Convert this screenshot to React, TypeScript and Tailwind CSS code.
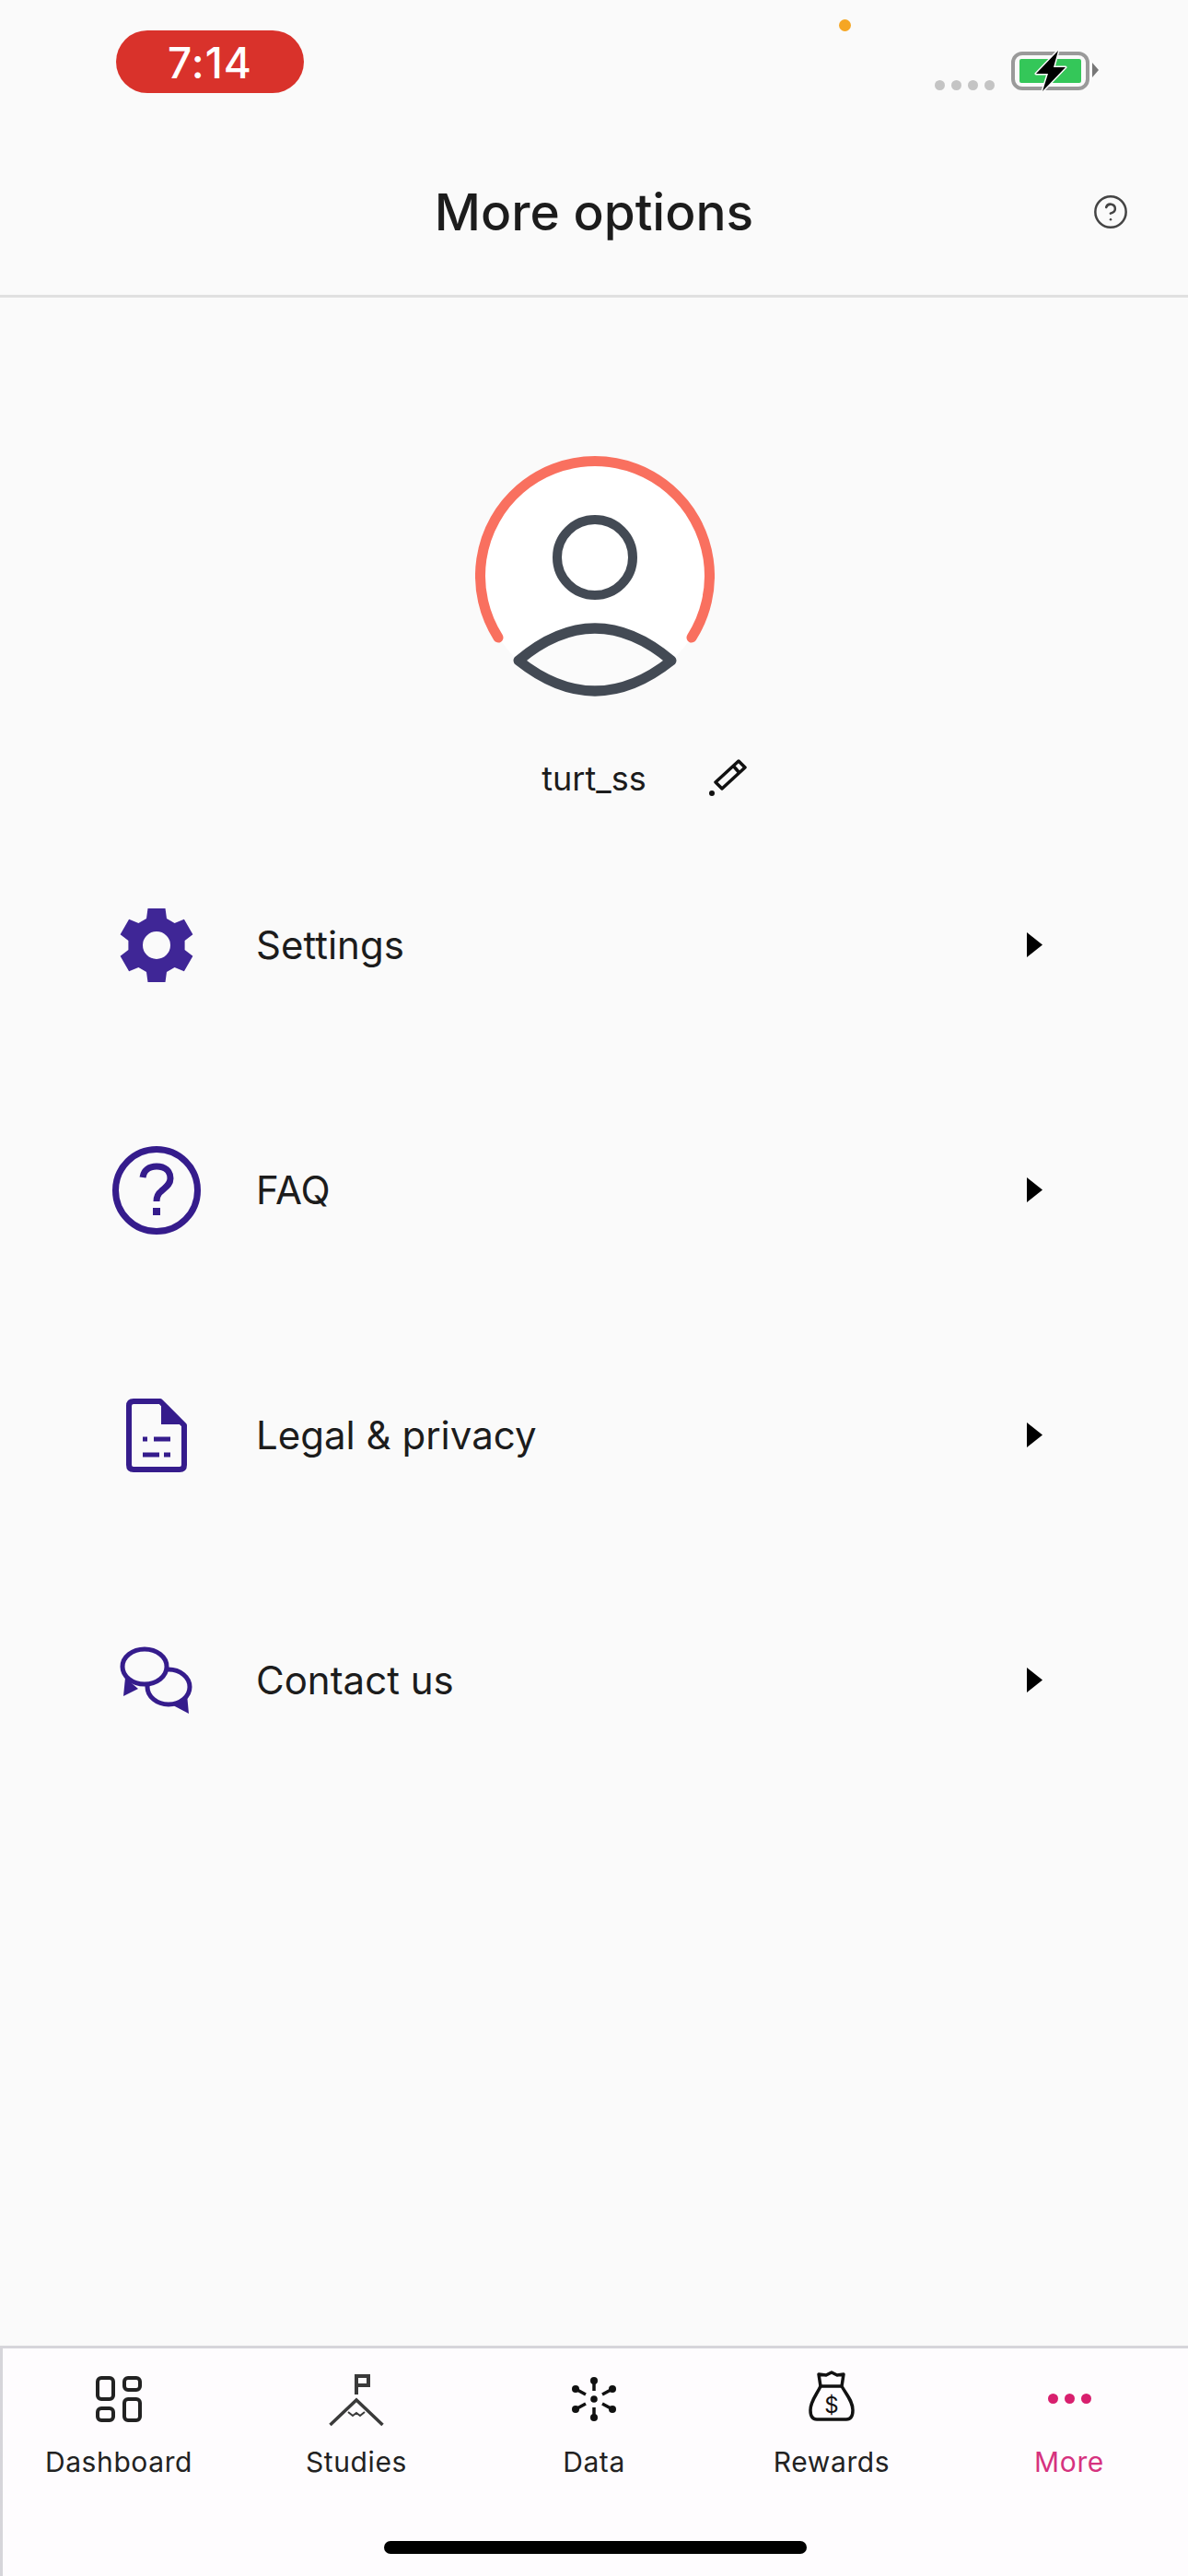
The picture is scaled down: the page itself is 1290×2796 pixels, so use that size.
import React from 'react';
import { CircleHelp } from 'lucide-react';

const PURPLE = '#351c8c';

// six toothed gear, centre 40,40
const gearPath = () => {
  const pts: string[] = [];
  for (let i = 0; i < 6; i++) {
    const a = (i * Math.PI) / 3;
    const at = (r: number, t: number) =>
      `${(40 + r * Math.sin(a) + t * Math.cos(a)).toFixed(1)} ${(40 - r * Math.cos(a) + t * Math.sin(a)).toFixed(1)}`;
    pts.push(at(29, -11), at(40, -9.5), at(40, 9.5), at(29, 11));
  }
  return `M${pts.join(' L')} Z M55 40 A15 15 0 1 0 25 40 A15 15 0 1 0 55 40 Z`;
};

const GearIcon = () => (
  <svg width="80" height="80" viewBox="0 0 80 80">
    <path d={gearPath()} fill="#3f2696" fillRule="evenodd" />
  </svg>
);

const FaqIcon = () => (
  <svg width="96" height="96" viewBox="0 0 96 96" fill="none">
    <circle cx="48" cy="48" r="44.5" stroke={PURPLE} strokeWidth="7" />
    <path
      d="M33 34 C34 26 40 22 48 22 C57 22 63 27 63 35 C63 42 57 45 53 49 C49 52 48 55 48 60"
      stroke={PURPLE}
      strokeWidth="7"
    />
    <rect x="44" y="67" width="8" height="8" fill={PURPLE} />
  </svg>
);

const DocIcon = () => (
  <svg width="66" height="80" viewBox="0 0 66 80" fill="none">
    <path
      d="M8 3 H37 L63 29 V72 Q63 77 58 77 H8 Q3 77 3 72 V8 Q3 3 8 3 Z"
      stroke={PURPLE}
      strokeWidth="6"
      strokeLinejoin="round"
    />
    <path d="M38 4 L63 28 H38 Z" fill={PURPLE} />
    <path d="M18 44 H23 M30 44 H48 M18 61 H36 M41 61 H48" stroke={PURPLE} strokeWidth="5" />
  </svg>
);

const ChatIcon = () => (
  <svg width="80" height="74" viewBox="0 0 80 74" fill="none">
    <path d="M75 73 L73 52 L58 64 Z" fill={PURPLE} />
    <ellipse cx="53" cy="44" rx="23" ry="19" stroke={PURPLE} strokeWidth="5" fill="#fafafa" />
    <path d="M4 54 L6 34 L20 46 Z" fill={PURPLE} />
    <ellipse cx="27" cy="22" rx="24" ry="19" stroke={PURPLE} strokeWidth="5" fill="#fafafa" />
  </svg>
);

const Avatar = () => (
  <svg width="260" height="262" viewBox="0 0 260 262" fill="none" className="ml-[2px]">
    <circle cx="130" cy="130" r="124" fill="#ffffff" />
    <path
      d="M25 197 A124.5 124.5 0 1 1 235 197"
      stroke="#f9705f"
      strokeWidth="11"
      strokeLinecap="round"
    />
    <circle cx="130" cy="110" r="41" stroke="#434a54" strokeWidth="10" />
    <path
      d="M47 222 Q130 152 213 222 Q130 288 47 222 Z"
      stroke="#434a54"
      strokeWidth="11"
      strokeLinejoin="round"
      fill="#fbfbfb"
    />
  </svg>
);

const Pencil = () => (
  <svg width="42" height="42" viewBox="0 0 42 42" fill="none" className="ml-[67px]">
    <path d="M8 25 L33 2 L40 9 L15 32 Z" stroke="#111" strokeWidth="3.5" strokeLinejoin="round" />
    <path d="M27 7 L34 15" stroke="#111" strokeWidth="3.5" />
    <circle cx="4" cy="37" r="3" fill="#111" />
  </svg>
);

const Battery = () => (
  <svg width="96" height="44" viewBox="0 0 96 44" fill="none">
    <rect x="2" y="3" width="81" height="38" rx="10" stroke="#9a9a9a" strokeWidth="4" />
    <rect x="9" y="9" width="67" height="26" rx="2" fill="#34c759" />
    <path d="M88 13 L95 21 L88 29 Z" fill="#777" />
    <path
      d="M51 0 L27 25 H40 L34 44 L59 18 H46 Z"
      fill="#000"
      stroke="#fafafa"
      strokeWidth="3"
      paintOrder="stroke"
      strokeLinejoin="round"
    />
  </svg>
);

const DashboardIcon = () => (
  <svg width="50" height="50" viewBox="0 0 50 50" fill="none" stroke="#222" strokeWidth="4">
    <rect x="2" y="2" width="17" height="23" rx="4" />
    <rect x="31" y="2" width="17" height="13" rx="4" />
    <rect x="2" y="35" width="17" height="13" rx="4" />
    <rect x="31" y="25" width="17" height="23" rx="4" />
  </svg>
);

const StudiesIcon = () => (
  <svg width="60" height="58" viewBox="0 0 60 58" fill="none" stroke="#3a3a3a" className="mt-[3px]">
    <path d="M30 1 V23" strokeWidth="4" />
    <rect x="30" y="3" width="13" height="10" strokeWidth="4" />
    <path d="M1.5 56 L30 29 L58.5 56" strokeWidth="3.5" />
    <path d="M21 42 L26 46 L30 43 L34 46 L39 42" strokeWidth="2" />
  </svg>
);

const DataIcon = () => (
  <svg width="50" height="50" viewBox="-25 -25 50 50" fill="none" stroke="#111" strokeWidth="3.5">
    <circle r="3.8" fill="#111" stroke="none" />
    <path d="M0 -20 V-9 M0 20 V9 M-20 -11 L-9 -5 M20 -11 L9 -5 M-20 11 L-9 5 M20 11 L9 5" />
    {[[0, -20], [0, 20], [-20, -11], [20, -11], [-20, 11], [20, 11]].map(([x, y]) => (
      <circle key={`${x}${y}`} cx={x} cy={y} r="4" fill="#111" stroke="none" />
    ))}
  </svg>
);

const RewardsIcon = () => (
  <svg width="50" height="55" viewBox="0 0 50 55" fill="none" stroke="#111" strokeWidth="3.5" className="mb-[6px]">
    <path d="M13 17 L11 4 L19 5 L25 2 L31 5 L38 4 L36 17 Z" strokeLinejoin="round" />
    <path d="M13 17 C9 26 2 33 2 43 C2 50 5 53 9 53 H41 C45 53 48 50 48 43 C48 33 41 26 36 17" />
    <text
      x="25"
      y="46"
      textAnchor="middle"
      fontSize="24"
      fill="#111"
      stroke="none"
      fontFamily="Inter, sans-serif"
    >
      $
    </text>
  </svg>
);

const MoreIcon = () => (
  <div className="flex gap-[7px]">
    <span className="h-[11px] w-[11px] rounded-full bg-[#d81f6e]" />
    <span className="h-[11px] w-[11px] rounded-full bg-[#d81f6e]" />
    <span className="h-[11px] w-[11px] rounded-full bg-[#d81f6e]" />
  </div>
);

const Arrow = () => (
  <svg width="17" height="27" viewBox="0 0 17 27" className="mb-[2px]">
    <path d="M0 0 L17 13.5 L0 27 Z" fill="#000" />
  </svg>
);

const rows = [
  { label: 'Settings', icon: <GearIcon /> },
  { label: 'FAQ', icon: <FaqIcon /> },
  { label: 'Legal & privacy', icon: <DocIcon /> },
  { label: 'Contact us', icon: <ChatIcon /> },
];

const tabs = [
  { label: 'Dashboard', icon: <DashboardIcon /> },
  { label: 'Studies', icon: <StudiesIcon /> },
  { label: 'Data', icon: <DataIcon /> },
  { label: 'Rewards', icon: <RewardsIcon /> },
  { label: 'More', icon: <MoreIcon />, active: true },
];

export default function App() {
  return (
    <div className="relative flex h-[2796px] w-[1290px] flex-col overflow-hidden bg-[#fafafa] font-['Inter',sans-serif] text-[#1c1c1c]">
      {/* Recording dot */}
      <span className="absolute left-[911px] top-[21px] h-[13px] w-[13px] rounded-full bg-[#f5a623]" />

      {/* Header */}
      <header className="flex h-[323px] flex-col border-b-[3px] border-[#e0e0e0]">
        <div className="flex items-end justify-between pl-[126px] pr-[96px] pt-[33px]">
          <div className="flex h-[68px] w-[204px] items-center justify-center rounded-[34px] bg-[#d9322b] pt-[2px] text-[46px] font-medium leading-none tracking-[1px] text-white">
            7:14
          </div>
          <div className="mb-[2px] flex items-end">
            <div className="mb-[1px] flex gap-[7px]">
              <span className="h-[11px] w-[11px] rounded-full bg-[#c4c4c4]" />
              <span className="h-[11px] w-[11px] rounded-full bg-[#c4c4c4]" />
              <span className="h-[11px] w-[11px] rounded-full bg-[#c4c4c4]" />
              <span className="h-[11px] w-[11px] rounded-full bg-[#c4c4c4]" />
            </div>
            <div className="ml-[18px]">
              <Battery />
            </div>
          </div>
        </div>
        <div className="grid flex-1 grid-cols-[1fr_auto_1fr] items-center pt-[40px]">
          <div />
          <h1 className="text-[55px] font-medium leading-none">More options</h1>
          <div className="flex justify-end pr-[64px] pb-[2px]">
            <CircleHelp size={40} strokeWidth={1.5} color="#444" />
          </div>
        </div>
      </header>

      <main className="flex flex-1 flex-col pt-[172px]">
        {/* Profile */}
        <div className="flex justify-center">
          <Avatar />
        </div>
        <div className="mt-[66px] grid grid-cols-[1fr_auto_1fr] items-center">
          <div />
          <span className="text-[36px] leading-[44px]">turt_ss</span>
          <div className="flex">
            <Pencil />
          </div>
        </div>

        {/* Menu rows */}
        <div className="mt-[26px] flex flex-col">
          {rows.map(row => (
            <div key={row.label} className="flex h-[266px] items-center pl-[120px] pr-[158px]">
              <div className="flex w-[100px] justify-center">{row.icon}</div>
              <span className="ml-[58px] flex-1 text-[42px] leading-none">{row.label}</span>
              <Arrow />
            </div>
          ))}
        </div>
      </main>

      {/* Bottom tab bar */}
      <nav className="relative grid h-[250px] grid-cols-5 border-t-[3px] border-[#d6d5da] bg-[#fefcfe] pt-[24px] shadow-[inset_3px_0_0_#d6d5da]">
        {tabs.map(tab => (
          <div key={tab.label} className="flex flex-col items-center">
            <div className="flex h-[61px] items-center justify-center">{tab.icon}</div>
            <span
              className={
                tab.active
                  ? 'mt-[20px] text-[30px] leading-[36px] tracking-[0.6px] text-[#d6327f]'
                  : 'mt-[20px] text-[30px] leading-[36px] tracking-[0.6px] text-[#222]'
              }
            >
              {tab.label}
            </span>
          </div>
        ))}
        <span className="absolute bottom-[24px] left-[417px] h-[14px] w-[459px] rounded-full bg-black" />
      </nav>
    </div>
  );
}
